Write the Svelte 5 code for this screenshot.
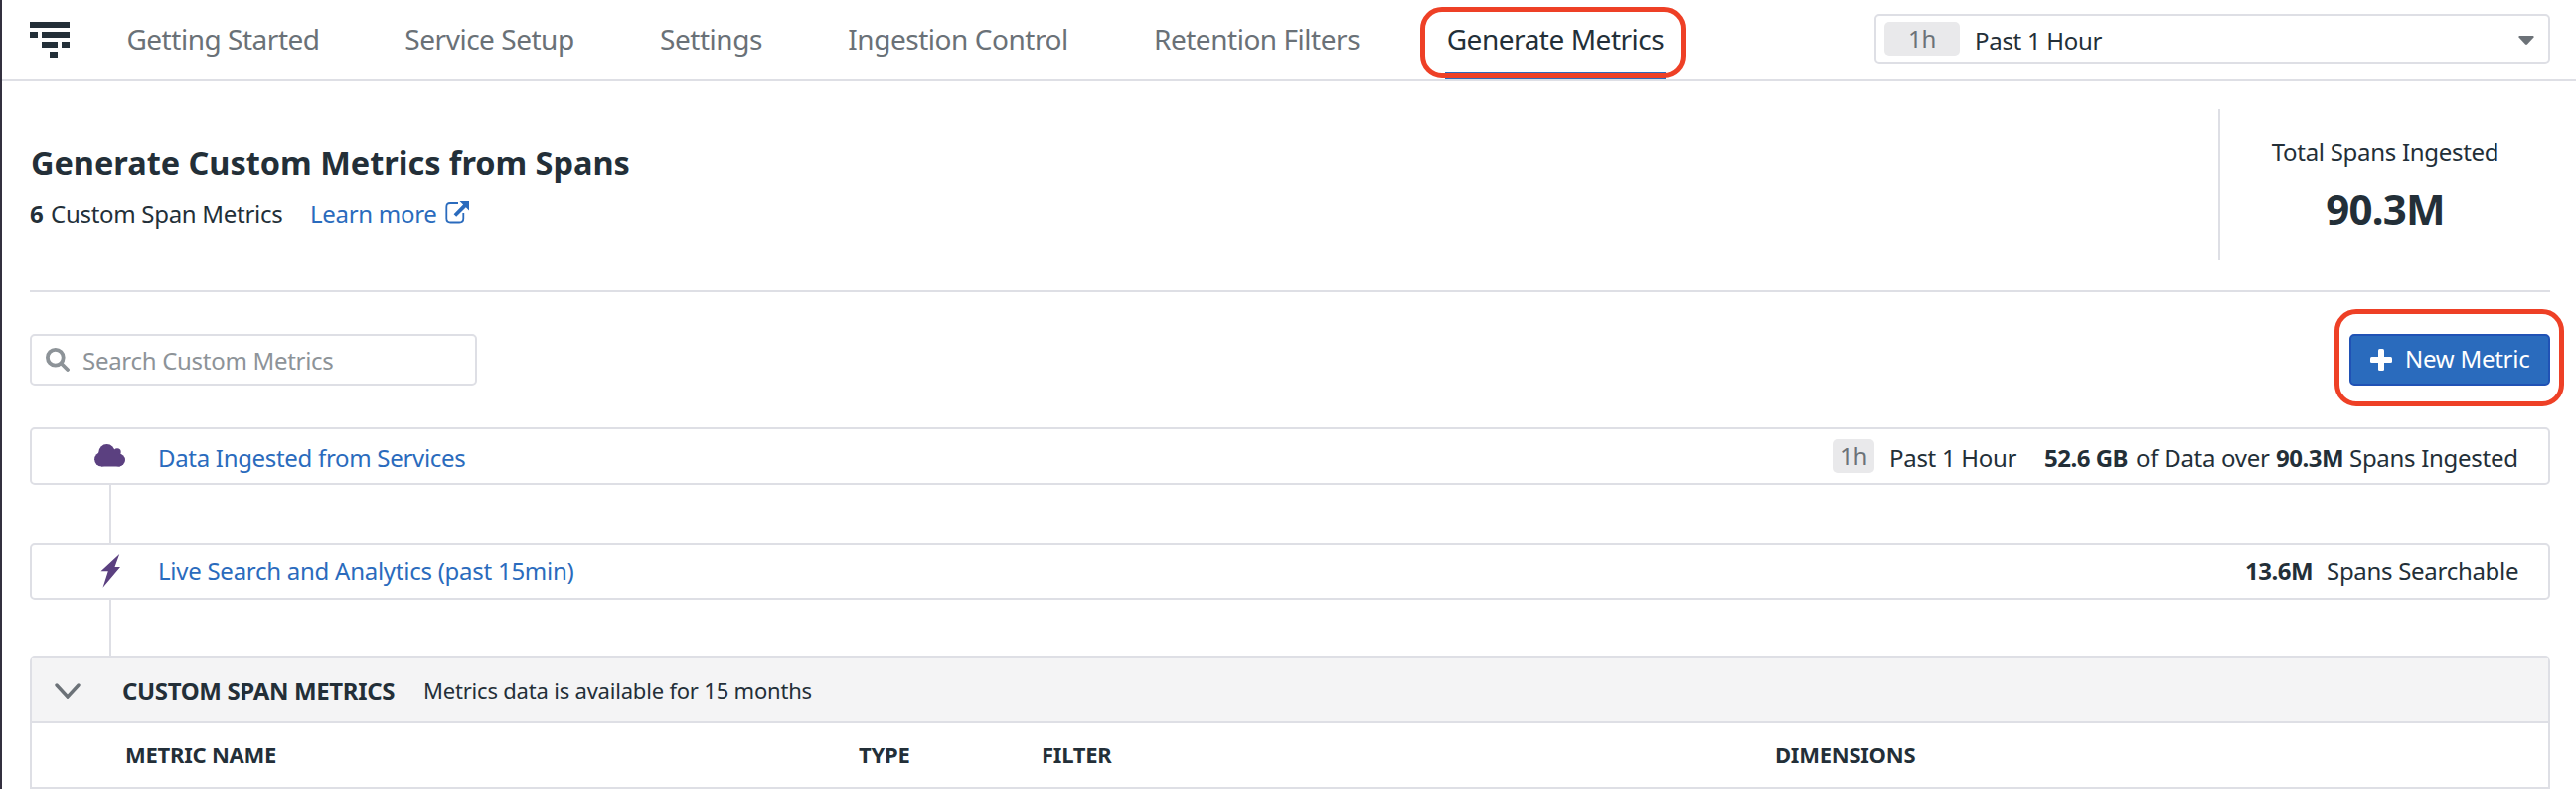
<script>
  const tabs = [
    { label: 'Getting Started', w: 194 },
    { label: 'Service Setup', w: 170 },
    { label: 'Settings', w: 104 },
    { label: 'Ingestion Control', w: 221 },
    { label: 'Retention Filters', w: 208 },
    { label: 'Generate Metrics', w: 222, active: true }
  ];
</script>

<div class="page">
  <header>
    <svg class="logo" width="40" height="36" viewBox="0 0 40 36" fill="#232f38">
      <rect width="40" height="6" /><rect y="10" width="8" height="6" /><rect x="12" y="10" width="28" height="6" />
      <rect x="12" y="20" width="16" height="6" /><rect x="32" y="20" width="8" height="6" /><rect x="20" y="30" width="8" height="6" />
    </svg>
    <nav>
      {#each tabs as tab}
        <a class:active={tab.active} style="width:{tab.w}px"><span>{tab.label}</span>{#if tab.active}<i class="ring"></i>{/if}</a>
      {/each}
    </nav>
    <div class="select">
      <span class="badge wide">1h</span><span class="period">Past 1 Hour</span>
      <svg width="16" height="9" viewBox="0 0 16 9"><path d="M1 0h14q1 .5.5 1.500L9 8.500q-1 .8-2 0L.5 1.500Q0 .5 1 0z" fill="#6c7278" /></svg>
    </div>
  </header>

  <main>
    <section class="intro">
      <div class="heading">
        <h1>Generate Custom Metrics from Spans</h1>
        <p><b>6</b> <span class="count">Custom Span Metrics</span><a class="learn">Learn more</a>
          <svg width="24" height="24" viewBox="0 0 24 24"><path d="M13 3H5Q1.300 3 1.300 7v11.500q0 4 4 4h9q4 0 4-4V13" fill="none" stroke="#2a6bbd" stroke-width="1.800" /><path d="M14.500 1H24v9.500l-3.200-3.200-9.600 9.500-2.600-2.600 9.500-9.600z" fill="#2a6bbd" /></svg>
        </p>
      </div>
      <div class="total"><span>Total Spans Ingested</span><strong>90.3M</strong></div>
    </section>

    <section class="toolbar">
      <div class="search">
        <svg width="24" height="24" viewBox="0 0 24 24" fill="none" stroke="#8d9398"><circle cx="9.800" cy="9.800" r="7.900" stroke-width="3.800" /><path d="M16 16l6 6" stroke-width="3.800" stroke-linecap="round" /></svg>
        <span>Search Custom Metrics</span>
      </div>
      <button>
        <svg width="22" height="22" viewBox="0 0 22 22" fill="#fff"><rect x="8" width="6" height="22" rx="1.500" /><rect y="8" width="22" height="6" rx="1.500" /></svg>
        <span>New Metric</span><i class="ring"></i>
      </button>
    </section>

    <div class="row">
      <div class="icon cloud"><svg width="32" height="23" viewBox="0 0 32 23" fill="#5b4080"><circle cx="12.500" cy="8.200" r="8.200" /><circle cx="23" cy="7.900" r="3.700" /><circle cx="7.300" cy="15.300" r="7.200" /><circle cx="24.500" cy="16" r="6.500" /><path d="M7 8h18l1 6v8.500H7z" /></svg></div>
      <a class="name">Data Ingested from Services</a>
      <div class="stats first"><span class="badge">1h</span><span>Past 1 Hour</span><b>52.6 GB</b><span>of Data over</span><b>90.3M</b><span>Spans Ingested</span></div>
    </div>
    <div class="link"></div>
    <div class="row">
      <div class="icon"><svg width="20" height="34" viewBox="0 0 20 34"><path d="M19.200 0L.5 17.300h7.300L2.500 33.700 20 13h-5.500z" fill="#5b4080" /></svg></div>
      <a class="name live">Live Search and Analytics (past 15min)</a>
      <div class="stats second"><b>13.6M</b><span>Spans Searchable</span></div>
    </div>
    <div class="link"></div>

    <section class="table">
      <div class="caption">
        <svg width="26" height="16" viewBox="0 0 26 16"><path d="M2 2l11 12L24 2" fill="none" stroke="#6c7278" stroke-width="3.400" stroke-linecap="round" /></svg>
        <h2>CUSTOM SPAN METRICS</h2><span>Metrics data is available for 15 months</span>
      </div>
      <div class="columns"><b>METRIC NAME</b><b>TYPE</b><b>FILTER</b><b>DIMENSIONS</b></div>
    </section>
  </main>
</div>

<style>
  :global(body) { margin: 0; background: #fff; }
  .page, .page * { box-sizing: border-box; }
  .page { width: 2592px; height: 794px; overflow: hidden; border-left: 2px solid #33303f; background: #fff; color: #232f38; font: 24px/34px "Noto Sans", sans-serif; letter-spacing: -0.29px; white-space: nowrap; }
  header { height: 82px; display: flex; border-bottom: 2px solid #dedfe5; padding-right: 26px; }
  .logo { margin: 22px 0 0 28px; flex: none; }
  nav { display: flex; gap: 86px; margin-left: 57px; flex: 1; }
  nav a { height: 80px; color: #6a7177; font-size: 28px; line-height: 79px; letter-spacing: -0.47px; display: flex; justify-content: center; position: relative; }
  nav a:not(.active) { padding-left: 1px; }
  nav a.active { color: #232f38; border-bottom: 8px solid #2a6bbd; }
  .ring { position: absolute; border: 5px solid #ee4026; border-radius: 22px; }
  nav .ring { left: -25px; top: 7px; width: 267px; height: 71px; }
  .select { width: 680px; height: 50px; margin-top: 14px; border: 2px solid #dedfe5; border-radius: 5px; display: flex; align-items: center; padding: 0 14px 0 8px; }
  .badge { width: 42px; height: 34px; line-height: 34px; border-radius: 5px; background: #e9e9eb; color: #6c7278; text-align: center; flex: none; }
  .wide { width: 76px; }
  .period { margin-left: 15px; margin-top: 4px; flex: 1; }
  .select svg { margin-top: 3px; }
  main { padding: 0 26px 0 28px; }
  .intro { height: 212px; border-bottom: 2px solid #dedfe5; display: flex; justify-content: space-between; }
  h1 { margin: 60px 0 0 1px; font-size: 32.5px; line-height: 44px; font-weight: 700; letter-spacing: -0.03px; }
  .heading p { margin: 12px 0 0; display: flex; }
  .heading p b { width: 21px; }
  .count { width: 261px; }
  .learn { width: 136px; color: #2a6bbd; }
  .heading p svg { margin-top: 3px; }
  .total { width: 334px; height: 152px; margin-top: 28px; border-left: 2px solid #dedfe5; text-align: center; display: flex; flex-direction: column; padding-top: 26px; }
  .total strong { font-size: 42px; line-height: 52px; margin-top: 14px; letter-spacing: -0.8px; }
  .toolbar { display: flex; justify-content: space-between; padding: 42px 0; }
  .search { width: 450px; height: 52px; border: 2px solid #dedfe5; border-radius: 5px; padding-left: 14px; display: flex; align-items: center; gap: 13px; color: #8d9398; }
  .search span { padding-top: 2px; }
  button { position: relative; width: 202px; height: 52px; border: 2px solid #2052b5; border-radius: 5px; background: #2a6bbd; color: #fff; font: inherit; letter-spacing: -0.25px; padding: 0 0 0 19px; display: flex; align-items: center; gap: 13px; }
  button span { padding-bottom: 2px; }
  button .ring { left: -17px; top: -27px; width: 231px; height: 98px; }
  .row { height: 58px; border: 2px solid #dedfe5; border-radius: 5px; display: flex; align-items: center; padding-right: 29px; }
  .icon { width: 32px; margin-left: 63px; display: flex; justify-content: center; }
  .cloud { padding-bottom: 2px; }
  .name { margin-left: 32px; color: #2a6bbd; flex: 1; padding-top: 3px; letter-spacing: -0.31px; }
  .live { padding-top: 0; letter-spacing: -0.26px; }
  .stats { display: grid; }
  .stats b { letter-spacing: -0.5px; }
  .first { grid-template-columns: 57px 156px 92px 141px 74px 171px; padding-top: 3px; }
  .first .badge { margin-top: -2px; }
  .second { grid-template-columns: 82px 194px; }
  .link { width: 2px; height: 58px; margin-left: 80px; background: #dedfe5; }
  .table { margin-top: -2px; border: 2px solid #dedfe5; border-radius: 5px 5px 0 0; }
  .caption { height: 66px; background: #f4f4f5; border-bottom: 2px solid #dedfe5; display: flex; align-items: center; padding-left: 23px; font-size: 22px; letter-spacing: -0.2px; }
  .caption svg { margin-top: 2px; }
  h2 { margin: 2px 0 0 42px; width: 303px; font-size: 24px; line-height: 34px; letter-spacing: -0.36px; }
  .columns { height: 64px; display: grid; grid-template-columns: 738px 184px 738px 1fr; padding: 0 0 2px 94px; align-items: center; font-size: 22px; letter-spacing: -0.24px; }
</style>
